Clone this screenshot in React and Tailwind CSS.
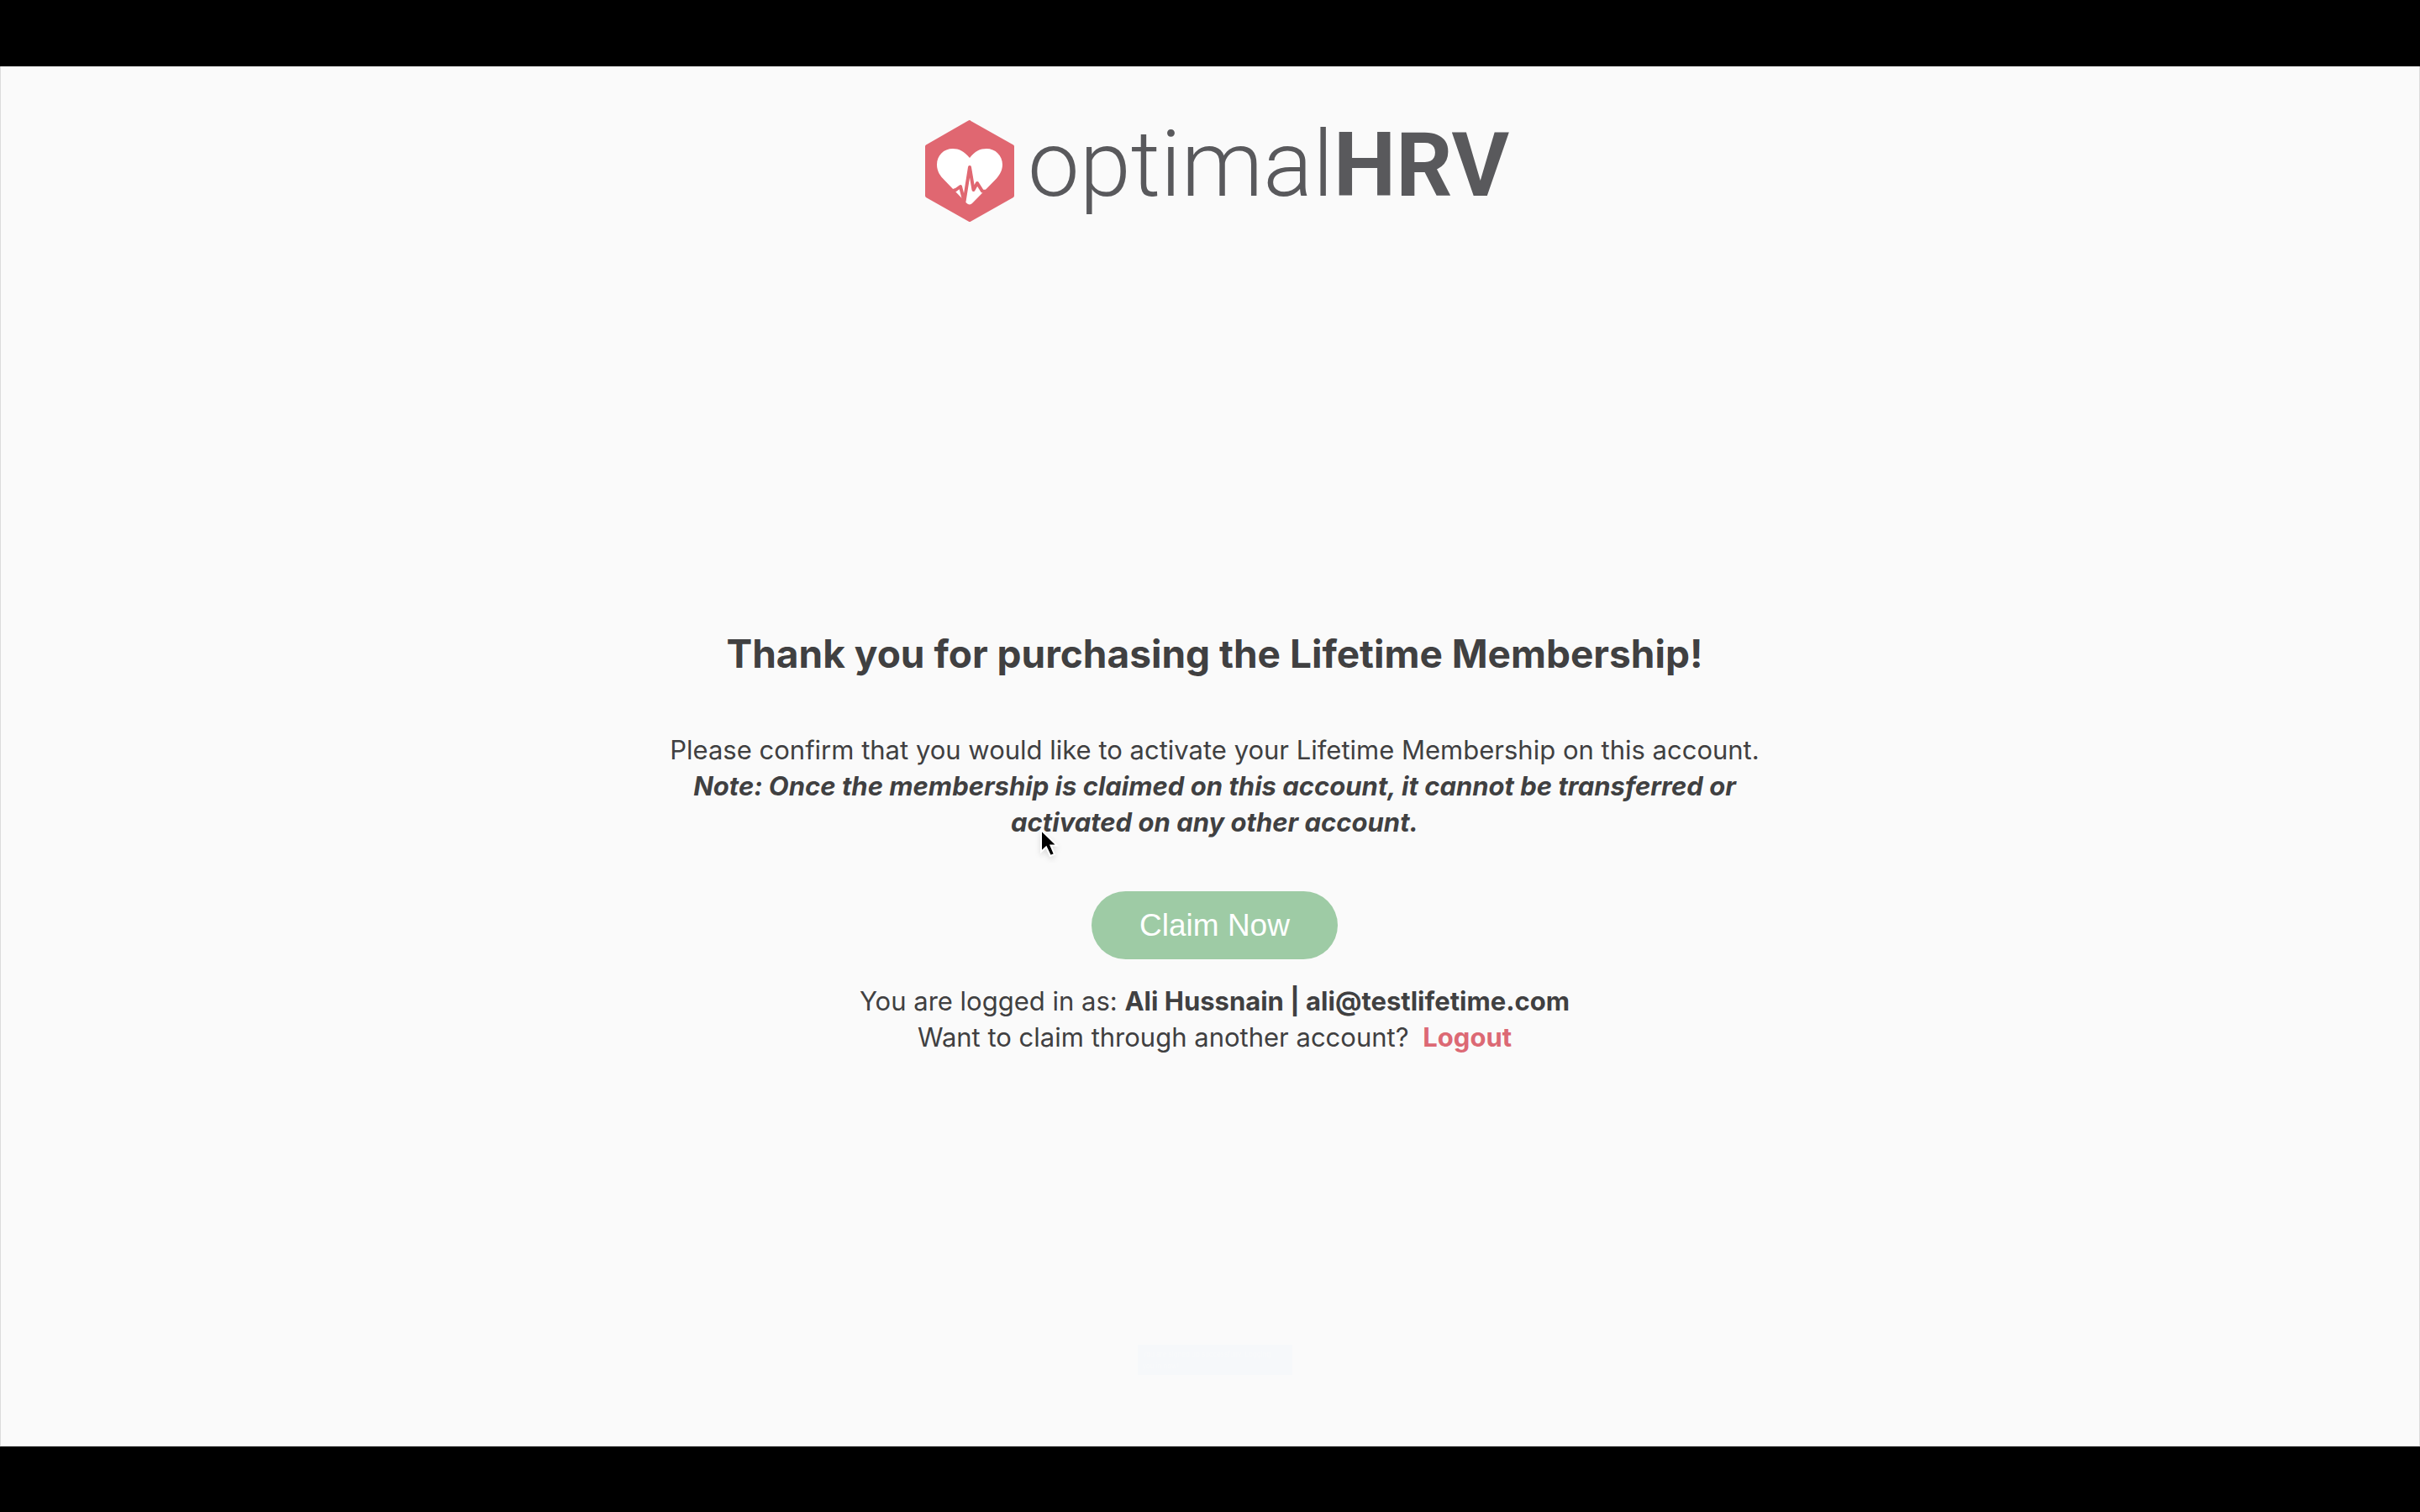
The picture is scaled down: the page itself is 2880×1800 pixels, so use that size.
function Logo() {
  return (
    <svg
      viewBox="0 0 692 124"
      className="h-[124px] w-[692px] overflow-visible"
      role="img"
      aria-label="optimalHRV"
    >
      <path
        d="M54.500 1.500 L106 30.500 Q107 31 107 32.500 V91 Q107 92 106 93 L55.500 121.500 Q54 122.500 52.500 121.500 L2 93 Q1 92 1 91 V32.500 Q1 31 2 30.500 L52.500 1.500 Q54 0.500 55.500 1.500 Z"
        fill="#e06771"
      />
      <path
        d="M54 46 C47.500 38 41 35 34 35 C23 35 15 43 15 54 C15 62 19 67.500 24 72.500 L50 99.500 Q54 103.500 57.500 99.500 L84 72.500 C89.500 67 93 61 93 54 C93 43 84.500 35 74 35 C66.500 35 60 38 54 46 Z"
        fill="#ffffff"
      />
      <path
        d="M32 86 L37.500 84 L43 80 L47.500 98 L54 57 L58.500 84 L63 76 L69 85.500 L76 86"
        fill="none"
        stroke="#e06771"
        strokeWidth="4"
        strokeLinejoin="round"
      />
      <text x="123" y="91" fontSize="110" fontWeight="300" fill="#59595c" fontFamily="Roboto, sans-serif">
        optimal
      </text>
      <text x="487" y="91" fontSize="105" fontWeight="700" fill="#59595c" fontFamily="Roboto, sans-serif">
        HRV
      </text>
    </svg>
  );
}

function Pointer() {
  return (
    <svg viewBox="0 0 24 36" className="absolute top-[26px] left-[34px] h-9 w-6 drop-shadow-md" aria-hidden="true">
      <path
        d="M2 2 V28 L8 22.500 L13 33 L18 31 L13.500 20.500 H21 Z"
        fill="#000000"
        stroke="#ffffff"
        strokeWidth="2"
      />
    </svg>
  );
}

export default function App() {
  return (
    <div className="flex min-h-screen flex-col border-t-[79px] border-b-[78px] border-black bg-[#fafafa] font-['Inter',sans-serif] text-[#404041]">
      <div className="flex grow flex-col items-center border-x border-b border-[#dcdcdc] pl-[11px]">
        <header className="pt-[63px]">
          <Logo />
        </header>

        <main className="flex w-full max-w-[1360px] grow flex-col items-center pt-[486px] text-center">
          <h1 className="text-[46px] leading-[52px] font-bold">
            Thank you for purchasing the Lifetime Membership!
          </h1>

          <p className="mt-[67px] text-[31px] leading-[43px]">
            Please confirm that you would like to activate your Lifetime Membership on this account.
          </p>
          <p className="text-[31px] leading-[43px] font-bold italic">
            Note: Once the membership is claimed on this account, it cannot be transferred or
            <br />
            <span className="relative">
              activated on any other account.
              <Pointer />
            </span>
          </p>

          <button
            type="button"
            className="mt-[61px] rounded-full bg-[#9ecba5] px-[57px] py-5 font-['Liberation_Sans',sans-serif] text-[37px] leading-[41px] text-white"
          >
            Claim Now
          </button>

          <p className="mt-7 text-[31px] leading-[43px]">
            You are logged in as: <strong className="font-bold">Ali Hussnain | ali@testlifetime.com</strong>
          </p>
          <p className="text-[31px] leading-[43px]">
            Want to claim through another account?{" "}
            <a href="#logout" className="ml-2 font-bold text-[#dc6974]">
              Logout
            </a>
          </p>
        </main>

        <div
          role="status"
          className="mb-[84px] w-[184px] bg-[#f6f8fa] px-1.5 py-1 text-[8px] leading-[14px] text-[#f9fafb]"
        >
          You are signed up successfully. Logging
          <br />
          you in now!
        </div>
      </div>
    </div>
  );
}
